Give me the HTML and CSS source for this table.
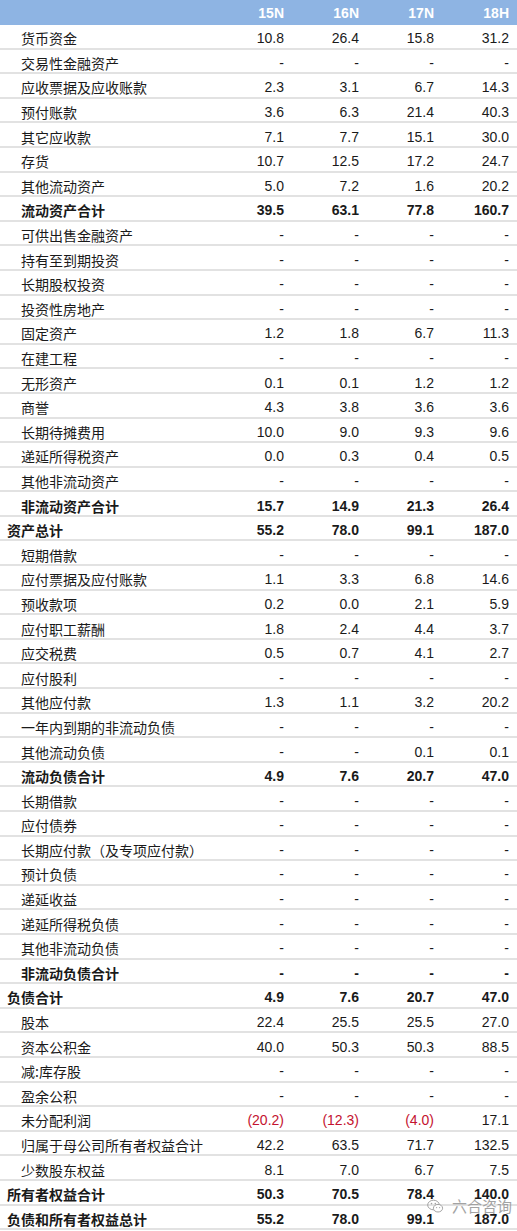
FILE: index.html
```html
<!DOCTYPE html>
<html lang="zh">
<head>
<meta charset="utf-8">
<title>资产负债表</title>
<link rel="stylesheet" href="styles.css">
</head>
<body>
<div class="sheet">
  <div class="row head"><span class="lbl"></span><span>15N</span><span>16N</span><span>17N</span><span>18H</span></div>
  <div class="row"><span class="lbl">货币资金</span><span>10.8</span><span>26.4</span><span>15.8</span><span>31.2</span></div>
  <div class="row"><span class="lbl">交易性金融资产</span><span>-</span><span>-</span><span>-</span><span>-</span></div>
  <div class="row"><span class="lbl">应收票据及应收账款</span><span>2.3</span><span>3.1</span><span>6.7</span><span>14.3</span></div>
  <div class="row"><span class="lbl">预付账款</span><span>3.6</span><span>6.3</span><span>21.4</span><span>40.3</span></div>
  <div class="row"><span class="lbl">其它应收款</span><span>7.1</span><span>7.7</span><span>15.1</span><span>30.0</span></div>
  <div class="row"><span class="lbl">存货</span><span>10.7</span><span>12.5</span><span>17.2</span><span>24.7</span></div>
  <div class="row"><span class="lbl">其他流动资产</span><span>5.0</span><span>7.2</span><span>1.6</span><span>20.2</span></div>
  <div class="row bold"><span class="lbl">流动资产合计</span><span>39.5</span><span>63.1</span><span>77.8</span><span>160.7</span></div>
  <div class="row"><span class="lbl">可供出售金融资产</span><span>-</span><span>-</span><span>-</span><span>-</span></div>
  <div class="row"><span class="lbl">持有至到期投资</span><span>-</span><span>-</span><span>-</span><span>-</span></div>
  <div class="row"><span class="lbl">长期股权投资</span><span>-</span><span>-</span><span>-</span><span>-</span></div>
  <div class="row"><span class="lbl">投资性房地产</span><span>-</span><span>-</span><span>-</span><span>-</span></div>
  <div class="row"><span class="lbl">固定资产</span><span>1.2</span><span>1.8</span><span>6.7</span><span>11.3</span></div>
  <div class="row"><span class="lbl">在建工程</span><span>-</span><span>-</span><span>-</span><span>-</span></div>
  <div class="row"><span class="lbl">无形资产</span><span>0.1</span><span>0.1</span><span>1.2</span><span>1.2</span></div>
  <div class="row"><span class="lbl">商誉</span><span>4.3</span><span>3.8</span><span>3.6</span><span>3.6</span></div>
  <div class="row"><span class="lbl">长期待摊费用</span><span>10.0</span><span>9.0</span><span>9.3</span><span>9.6</span></div>
  <div class="row"><span class="lbl">递延所得税资产</span><span>0.0</span><span>0.3</span><span>0.4</span><span>0.5</span></div>
  <div class="row"><span class="lbl">其他非流动资产</span><span>-</span><span>-</span><span>-</span><span>-</span></div>
  <div class="row bold"><span class="lbl">非流动资产合计</span><span>15.7</span><span>14.9</span><span>21.3</span><span>26.4</span></div>
  <div class="row bold top"><span class="lbl">资产总计</span><span>55.2</span><span>78.0</span><span>99.1</span><span>187.0</span></div>
  <div class="row"><span class="lbl">短期借款</span><span>-</span><span>-</span><span>-</span><span>-</span></div>
  <div class="row"><span class="lbl">应付票据及应付账款</span><span>1.1</span><span>3.3</span><span>6.8</span><span>14.6</span></div>
  <div class="row"><span class="lbl">预收款项</span><span>0.2</span><span>0.0</span><span>2.1</span><span>5.9</span></div>
  <div class="row"><span class="lbl">应付职工薪酬</span><span>1.8</span><span>2.4</span><span>4.4</span><span>3.7</span></div>
  <div class="row"><span class="lbl">应交税费</span><span>0.5</span><span>0.7</span><span>4.1</span><span>2.7</span></div>
  <div class="row"><span class="lbl">应付股利</span><span>-</span><span>-</span><span>-</span><span>-</span></div>
  <div class="row"><span class="lbl">其他应付款</span><span>1.3</span><span>1.1</span><span>3.2</span><span>20.2</span></div>
  <div class="row"><span class="lbl">一年内到期的非流动负债</span><span>-</span><span>-</span><span>-</span><span>-</span></div>
  <div class="row"><span class="lbl">其他流动负债</span><span>-</span><span>-</span><span>0.1</span><span>0.1</span></div>
  <div class="row bold"><span class="lbl">流动负债合计</span><span>4.9</span><span>7.6</span><span>20.7</span><span>47.0</span></div>
  <div class="row"><span class="lbl">长期借款</span><span>-</span><span>-</span><span>-</span><span>-</span></div>
  <div class="row"><span class="lbl">应付债券</span><span>-</span><span>-</span><span>-</span><span>-</span></div>
  <div class="row"><span class="lbl">长期应付款（及专项应付款）</span><span>-</span><span>-</span><span>-</span><span>-</span></div>
  <div class="row"><span class="lbl">预计负债</span><span>-</span><span>-</span><span>-</span><span>-</span></div>
  <div class="row"><span class="lbl">递延收益</span><span>-</span><span>-</span><span>-</span><span>-</span></div>
  <div class="row"><span class="lbl">递延所得税负债</span><span>-</span><span>-</span><span>-</span><span>-</span></div>
  <div class="row"><span class="lbl">其他非流动负债</span><span>-</span><span>-</span><span>-</span><span>-</span></div>
  <div class="row bold"><span class="lbl">非流动负债合计</span><span>-</span><span>-</span><span>-</span><span>-</span></div>
  <div class="row bold top"><span class="lbl">负债合计</span><span>4.9</span><span>7.6</span><span>20.7</span><span>47.0</span></div>
  <div class="row"><span class="lbl">股本</span><span>22.4</span><span>25.5</span><span>25.5</span><span>27.0</span></div>
  <div class="row"><span class="lbl">资本公积金</span><span>40.0</span><span>50.3</span><span>50.3</span><span>88.5</span></div>
  <div class="row"><span class="lbl">减:库存股</span><span>-</span><span>-</span><span>-</span><span>-</span></div>
  <div class="row"><span class="lbl">盈余公积</span><span>-</span><span>-</span><span>-</span><span>-</span></div>
  <div class="row"><span class="lbl">未分配利润</span><span class="neg">(20.2)</span><span class="neg">(12.3)</span><span class="neg">(4.0)</span><span>17.1</span></div>
  <div class="row"><span class="lbl">归属于母公司所有者权益合计</span><span>42.2</span><span>63.5</span><span>71.7</span><span>132.5</span></div>
  <div class="row"><span class="lbl">少数股东权益</span><span>8.1</span><span>7.0</span><span>6.7</span><span>7.5</span></div>
  <div class="row bold top"><span class="lbl">所有者权益合计</span><span>50.3</span><span>70.5</span><span>78.4</span><span>140.0</span></div>
  <div class="row bold top"><span class="lbl">负债和所有者权益总计</span><span>55.2</span><span>78.0</span><span>99.1</span><span>187.0</span></div>

  <div class="mark">
    <svg class="wx" width="17" height="15" viewBox="0 0 17 15">
      <ellipse cx="6.5" cy="6" rx="5.8" ry="4.8" fill="none" stroke="#9a9a9a" stroke-width="1"/>
      <ellipse cx="11" cy="9.2" rx="4.6" ry="3.8" fill="#fff" stroke="#9a9a9a" stroke-width="1"/>
      <circle cx="4.5" cy="4.6" r="0.8" fill="#9a9a9a"/>
      <circle cx="8.3" cy="4.6" r="0.8" fill="#9a9a9a"/>
      <circle cx="9.6" cy="8.6" r="0.6" fill="#9a9a9a"/>
      <circle cx="12.6" cy="8.6" r="0.6" fill="#9a9a9a"/>
    </svg>
    <span>六合咨询</span>
  </div>
</div>
</body>
</html>
```
FILE: styles.css
```css
html, body {
  margin: 0;
  padding: 0;
  background: #ffffff;
}
.sheet {
  position: relative;
  width: 517px;
  font-family: "Liberation Sans", Arial, "Noto Sans CJK SC", sans-serif;
  font-size: 14px;
  color: #1a1a1a;
}
.row {
  display: grid;
  grid-template-columns: 209px 75px 75px 75px 75px;
  height: 24.6px;
  box-sizing: border-box;
  border-bottom: 2px solid #e2e2e2;
  padding-top: 4px;
  align-items: center;
  line-height: 16px;
}
.row > span {
  text-align: right;
  white-space: nowrap;
}
.row > .lbl {
  text-align: left;
  padding-left: 21px;
  font-family: "Noto Sans CJK SC", sans-serif;
  font-size: 14px;
}
.row.top > .lbl {
  padding-left: 7px;
}
.row.bold > span {
  font-weight: bold;
}
.row.head {
  height: 25px;
  background: #8eb4e3;
  border-bottom: none;
  padding-top: 0;
  color: #ffffff;
  font-weight: bold;
}
.neg {
  color: #c4122f;
}
.mark {
  position: absolute;
  left: 427px;
  top: 1197px;
  display: flex;
  align-items: center;
  gap: 8px;
  color: #9a9a9a;
  font-family: "Noto Sans CJK SC", sans-serif;
  font-size: 15px;
  line-height: 18px;
  opacity: 0.9;
}
```
